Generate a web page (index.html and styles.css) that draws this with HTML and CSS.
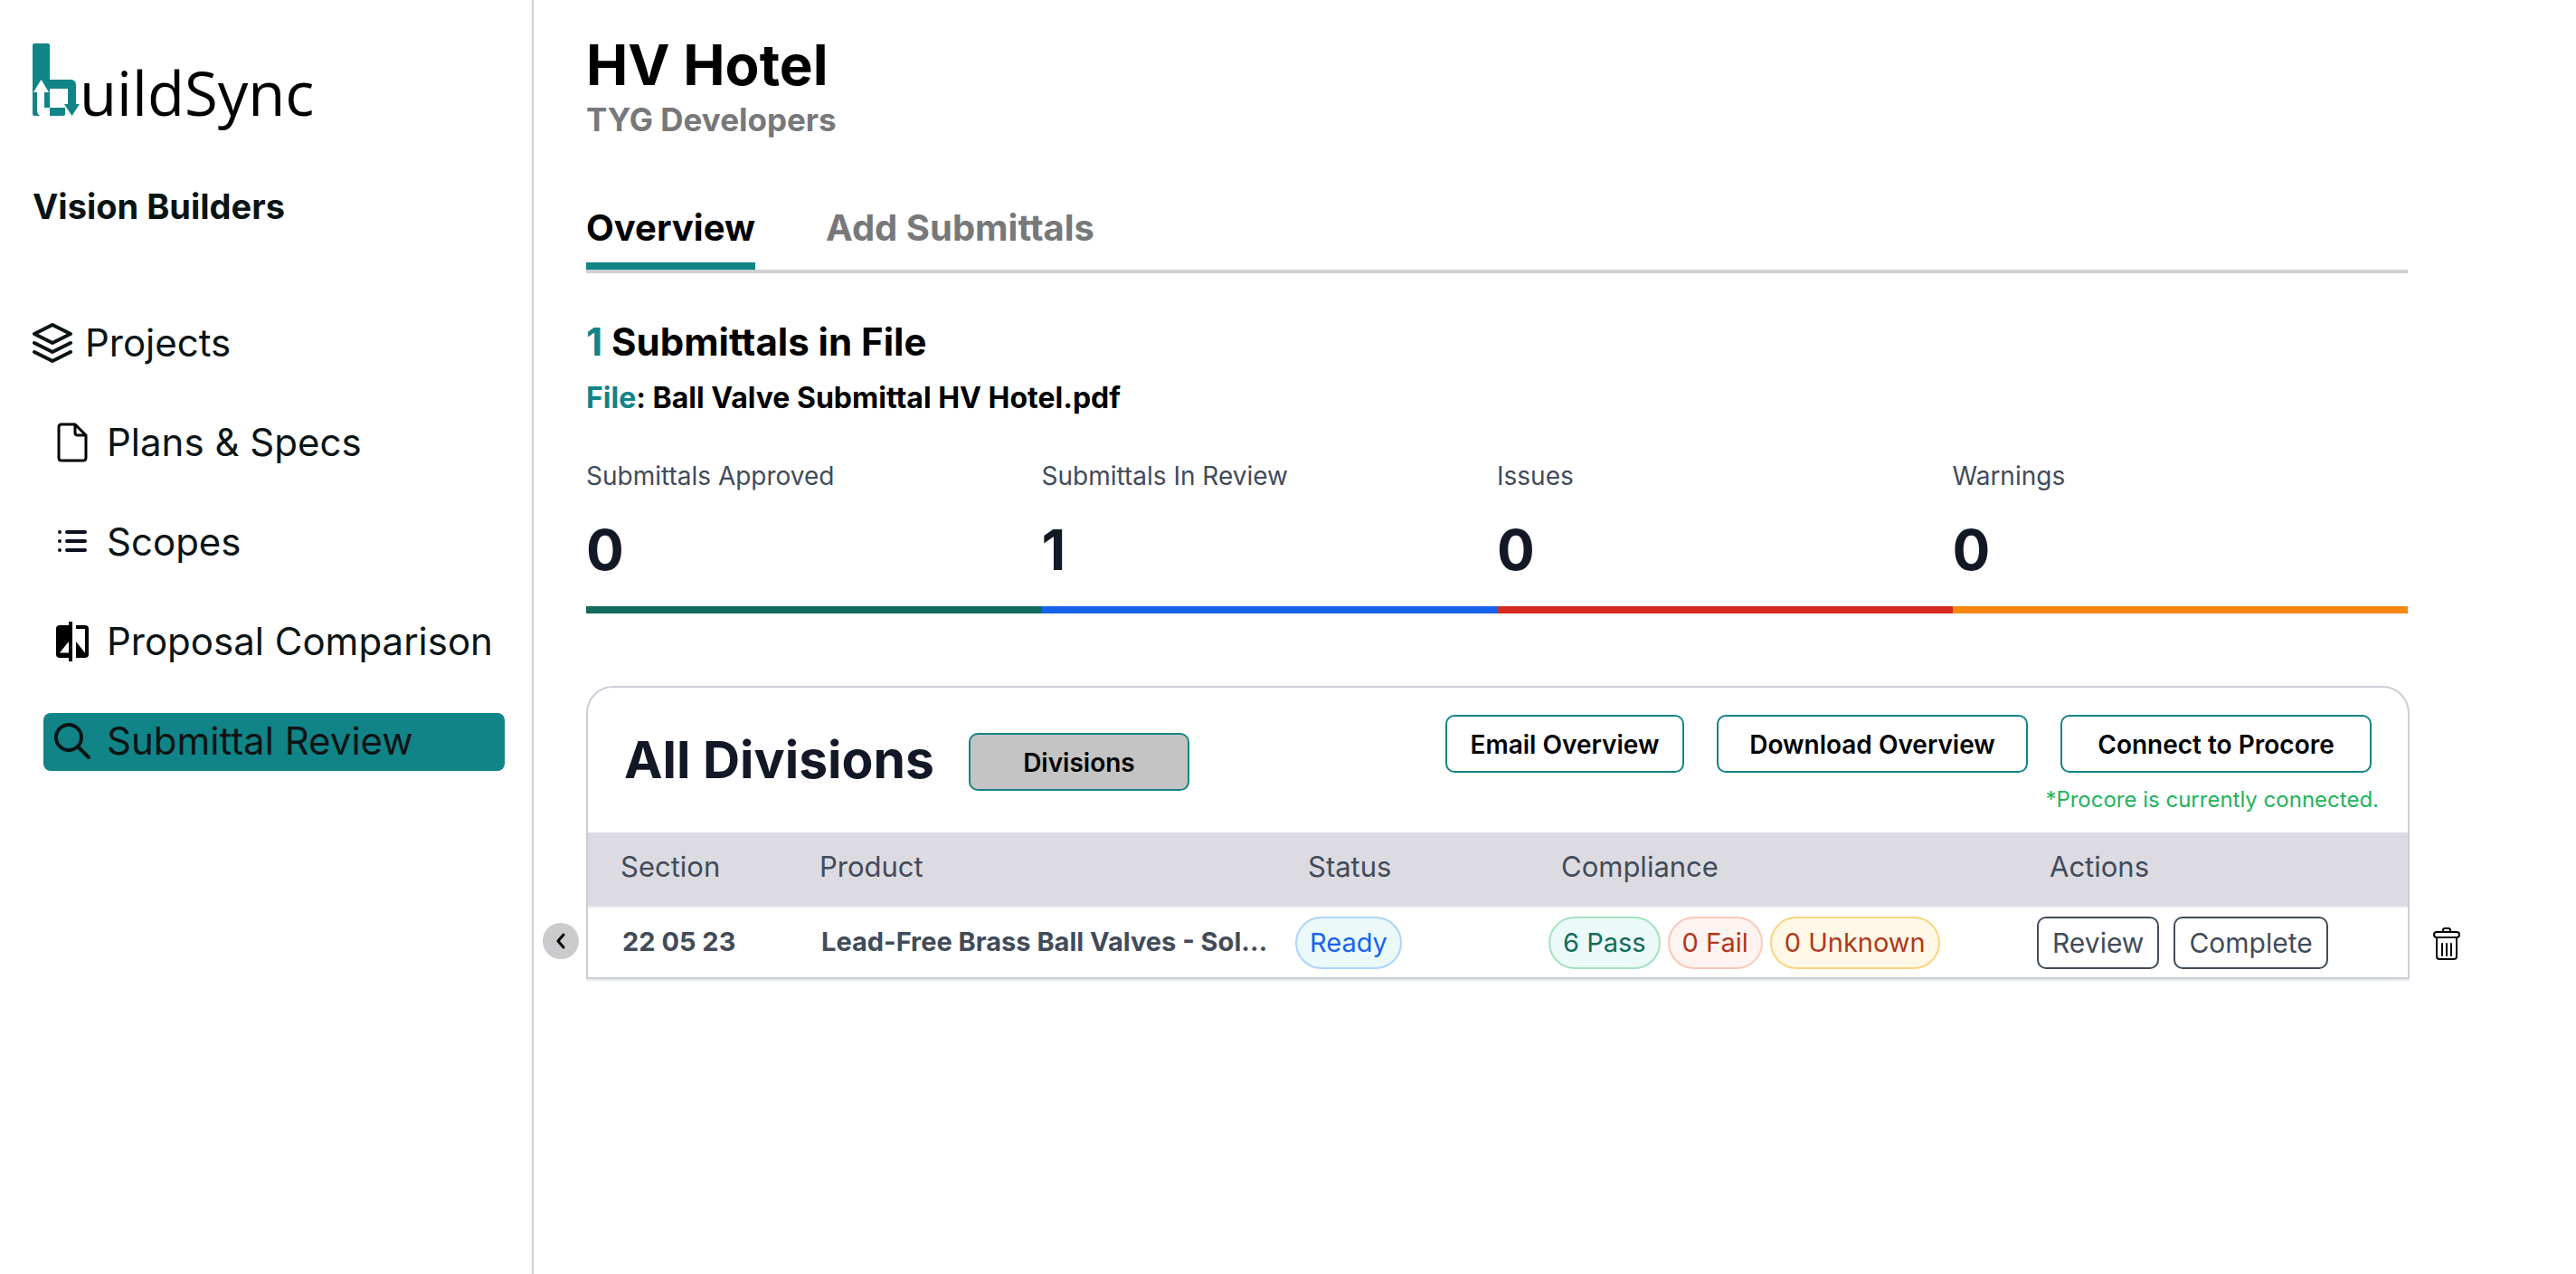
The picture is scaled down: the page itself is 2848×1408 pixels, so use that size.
FILE: index.html
```html
<!DOCTYPE html>
<html lang="en">
<head>
    <meta charset="UTF-8">
    <meta name="viewport" content="width=device-width, initial-scale=1.0">
    <title>HV Hotel - Submittal Review</title>
    <link rel="stylesheet" href="styles.css">
</head>
<body>
    <aside class="sidebar">
        <a class="logo" href="#">
            <svg class="logo-mark" viewBox="0 0 52 80" aria-hidden="true">
                <path fill="#118488" d="M0 2q0-2 2-2h15q2 0 2 2v78H2q-2 0-2-2z"/>
                <path fill="#118488" d="M19 40h23q6 0 6 6v21h4l-8.500 13L35 67h4V50H19zM19 71h17v7q0 2-2 2H19z"/>
                <path fill="#fff" d="M9.500 40L18 54h-5v17h6v9H9q-4-1-4-6V54H1z"/>
            </svg>
            <span class="logo-text">uildSync</span>
        </a>
        <h3 class="company">Vision Builders</h3>
        <nav class="nav">
            <a class="nav-item top" href="#">
                <svg class="nav-icon" viewBox="0 0 44 48" fill="none" stroke="#0b1415" stroke-width="4" stroke-linecap="round" stroke-linejoin="round">
                    <path d="M22 4L42 14 22 24 2 14zM2 24l20 10 20-10M2 34l20 10 20-10"/>
                </svg>
                Projects
            </a>
            <a class="nav-item" href="#">
                <svg class="nav-icon" viewBox="0 0 48 48" fill="none" stroke="#000" stroke-width="3" stroke-linejoin="round">
                    <path d="M27 4H12q-3 0-3 3v34q0 3 3 3h24q3 0 3-3V16zM27 4v9q0 3 3 3h9"/>
                </svg>
                Plans &amp; Specs
            </a>
            <a class="nav-item" href="#">
                <svg class="nav-icon" viewBox="0 0 48 48" fill="none" stroke="#0b1120" stroke-width="4" stroke-linecap="round">
                    <path d="M18 13h20M18 23h20M18 33h20M10 13h0M10 23h0M10 33h0"/>
                </svg>
                Scopes
            </a>
            <a class="nav-item" href="#">
                <svg class="nav-icon" viewBox="0 0 48 48" fill="#000">
                    <path fill-rule="evenodd" d="M20 2h4v44h-4v-4H10q-4 0-4-4V10q0-4 4-4h10zM20 24L10 36.500h10z"/>
                    <path d="M28 6h10q4 0 4 4v28q0 4-4 4H28V24l10 12.500V10H28z"/>
                </svg>
                Proposal Comparison
            </a>
            <a class="nav-item active" href="#">
                <svg class="nav-icon" viewBox="0 0 48 48" fill="none" stroke="#0b1415" stroke-width="4" stroke-linecap="round">
                    <circle cx="20" cy="20" r="14"/>
                    <path d="M31 31l11 11"/>
                </svg>
                Submittal Review
            </a>
        </nav>
    </aside>

    <main class="main">
        <header class="project-header">
            <h1>HV Hotel</h1>
            <p>TYG Developers</p>
        </header>

        <div class="tabs">
            <button class="tab active" type="button">Overview</button>
            <button class="tab" type="button">Add Submittals</button>
        </div>

        <section class="file-info">
            <h2><span class="teal">1</span> Submittals in File</h2>
            <p><span class="teal">File</span>: Ball Valve Submittal HV Hotel.pdf</p>
        </section>

        <section class="stats">
            <div class="stat green">
                <span class="stat-label">Submittals Approved</span>
                <span class="stat-value">0</span>
            </div>
            <div class="stat blue">
                <span class="stat-label">Submittals In Review</span>
                <span class="stat-value">1</span>
            </div>
            <div class="stat red">
                <span class="stat-label">Issues</span>
                <span class="stat-value">0</span>
            </div>
            <div class="stat orange">
                <span class="stat-label">Warnings</span>
                <span class="stat-value">0</span>
            </div>
        </section>

        <div class="divisions">
            <button class="collapse" type="button" aria-label="Collapse">
                <svg viewBox="0 0 20 20" fill="none" stroke="#000" stroke-width="3" stroke-linecap="round" stroke-linejoin="round">
                    <path d="M13 3L7 10l6 7"/>
                </svg>
            </button>

            <section class="card">
                <div class="card-header">
                    <h2>All Divisions</h2>
                    <button class="btn btn-divisions" type="button">Divisions</button>
                    <div class="card-actions">
                        <div class="card-buttons">
                            <button class="btn btn-email" type="button">Email Overview</button>
                            <button class="btn" type="button">Download Overview</button>
                            <button class="btn" type="button">Connect to Procore</button>
                        </div>
                        <p class="note">*Procore is currently connected.</p>
                    </div>
                </div>
                <table class="submittals">
                    <colgroup>
                        <col class="col-section">
                        <col class="col-product">
                        <col class="col-status">
                        <col class="col-compliance">
                        <col>
                    </colgroup>
                    <thead>
                        <tr>
                            <th>Section</th>
                            <th>Product</th>
                            <th>Status</th>
                            <th>Compliance</th>
                            <th>Actions</th>
                        </tr>
                    </thead>
                    <tbody>
                        <tr>
                            <td class="strong">22 05 23</td>
                            <td class="strong">Lead-Free Brass Ball Valves - Sol…</td>
                            <td class="chips"><span class="pill ready">Ready</span></td>
                            <td class="chips">
                                <div class="chip-row">
                                    <span class="pill pass">6 Pass</span>
                                    <span class="pill fail">0 Fail</span>
                                    <span class="pill unknown">0 Unknown</span>
                                </div>
                            </td>
                            <td class="chips">
                                <div class="action-row">
                                    <button class="row-btn" type="button">Review</button>
                                    <button class="row-btn" type="button">Complete</button>
                                </div>
                            </td>
                        </tr>
                    </tbody>
                </table>
            </section>

            <button class="trash" type="button" aria-label="Delete">
                <svg viewBox="0 0 30 38" fill="none" stroke="#000" stroke-width="2" stroke-linecap="round" stroke-linejoin="round">
                    <path d="M11 5.500V4q0-2 2-2h4q2 0 2 2v1.500"/>
                    <rect x="1" y="6" width="28" height="6" rx="3"/>
                    <path d="M4 12v21q0 3 3 3h16q3 0 3-3V12M10 19v13M15 19v13M20 19v13"/>
                </svg>
            </button>
        </div>
    </main>
</body>
</html>
```

FILE: styles.css
```css
* {
    box-sizing: border-box;
}
body {
    margin: 0;
    min-height: 100vh;
    display: flex;
    font-family: Inter, "Open Sans", sans-serif;
    background-color: #fff;
    color: #000;
}
h1, h2, h3, p {
    margin: 0;
}
button {
    font-family: inherit;
    cursor: pointer;
}
.teal {
    color: #118488;
}

/* Sidebar */
.sidebar {
    flex: 0 0 590px;
    padding: 48px 30px 0 36px;
    border-right: 2px solid #cfcfd1;
}
.logo {
    display: flex;
    align-items: baseline;
    color: #000;
    text-decoration: none;
}
.logo-mark {
    width: 52px;
    height: 80px;
}
.logo-text {
    font-family: "Open Sans", sans-serif;
    font-size: 67px;
    line-height: 68px;
}
.company {
    margin-top: 68px;
    font-size: 38px;
    line-height: 48px;
    color: #0b1415;
}
.nav {
    display: flex;
    flex-direction: column;
    gap: 46px;
    margin-top: 96px;
}
.nav-item {
    display: flex;
    align-items: center;
    gap: 14px;
    height: 64px;
    margin-left: 12px;
    padding: 0 0 2px 8px;
    border-radius: 8px;
    font-size: 42px;
    line-height: 60px;
    white-space: nowrap;
    color: #0b1415;
    text-decoration: none;
}
.nav-item.top {
    margin-left: 0;
    padding-left: 0;
}
.nav-item.active {
    background-color: #118488;
}
.nav-icon {
    width: 48px;
    height: 48px;
    flex: none;
}
.nav-item.top .nav-icon {
    width: 44px;
}

/* Main */
.main {
    flex: 1;
    min-width: 0;
    padding: 36px 186px 48px 58px;
}
.project-header h1 {
    font-size: 62px;
    line-height: 72px;
}
.project-header p {
    font-size: 35px;
    font-weight: bold;
    line-height: 48px;
    color: #77787a;
}
.tabs {
    display: flex;
    gap: 78px;
    margin-top: 72px;
    border-bottom: 4px solid #cfd0d3;
}
.tab {
    padding: 0 0 14px;
    border: none;
    border-bottom: 8px solid transparent;
    background: none;
    font-size: 40px;
    font-weight: bold;
    line-height: 48px;
    color: #77787a;
}
.tab.active {
    border-color: #118488;
    color: #000;
}
.file-info h2 {
    margin-top: 48px;
    font-size: 42px;
    line-height: 56px;
}
.file-info p {
    margin-top: 10px;
    font-size: 32px;
    font-weight: bold;
    line-height: 48px;
}

/* Stats */
.stats {
    display: grid;
    grid-template-columns: repeat(4, 1fr);
    margin-top: 42px;
}
.stat {
    display: flex;
    flex-direction: column;
    gap: 30px;
    padding-bottom: 30px;
    border-bottom: 8px solid;
}
.stat-label {
    font-size: 28px;
    line-height: 40px;
    color: #414b5a;
}
.stat-value {
    font-size: 62px;
    font-weight: bold;
    line-height: 64px;
    color: #121826;
}
.stat.green { border-color: #126b5c; }
.stat.blue { border-color: #1963ec; }
.stat.red { border-color: #d4291e; }
.stat.orange { border-color: #f8860f; }

/* Divisions card, with the row controls on either side of it */
.divisions {
    display: flex;
    align-items: flex-end;
    margin: 80px -58px 0 -48px;
}
.collapse {
    flex: none;
    display: flex;
    align-items: center;
    justify-content: center;
    width: 40px;
    height: 40px;
    margin: 0 8px 22px 0;
    padding: 0;
    border: none;
    border-radius: 50%;
    background-color: #cbcbcd;
}
.collapse svg {
    width: 20px;
    height: 20px;
}
.card {
    flex: 1;
    min-width: 0;
    border: 2px solid #c9ced7;
    border-radius: 30px 30px 0 0;
    box-shadow: 0 2px 0 #e8eaee;
    overflow: hidden;
}
.card-header {
    display: flex;
    align-items: flex-start;
    height: 160px;
    padding: 30px 32px 0 40px;
}
.card-header h2 {
    margin-top: 14px;
    font-size: 57px;
    line-height: 72px;
    color: #121826;
}
.btn {
    width: 344px;
    height: 64px;
    padding: 2px 0 0;
    border: 2px solid #118488;
    border-radius: 10px;
    background-color: #fff;
    font-size: 28px;
    font-weight: 600;
    color: #000;
}
.btn-divisions {
    width: 244px;
    margin: 20px 0 0 38px;
    background-color: #c4c4c4;
}
.btn-email {
    width: 264px;
}
.card-actions {
    margin-left: auto;
}
.card-buttons {
    display: flex;
    gap: 36px;
    padding-right: 8px;
}
.note {
    margin-top: 12px;
    font-size: 24px;
    line-height: 36px;
    text-align: right;
    color: #22b35b;
}

/* Table */
.submittals {
    width: 100%;
    table-layout: fixed;
    border-collapse: collapse;
    text-align: left;
    color: #414b5a;
}
.col-section { width: 220px; }
.col-product { width: 540px; }
.col-status { width: 280px; }
.col-compliance { width: 540px; }
.submittals th {
    height: 82px;
    padding: 0 0 6px 36px;
    background-color: #dcdbe1;
    border-bottom: 2px solid #e8e8ec;
    font-size: 31px;
    font-weight: normal;
}
.submittals td {
    height: 78px;
    padding: 0 0 0 38px;
    font-size: 29px;
    white-space: nowrap;
}
.submittals td.strong {
    padding-bottom: 2px;
    font-weight: bold;
}
.submittals td.chips {
    padding-left: 22px;
}
.chip-row {
    display: flex;
    gap: 8px;
}
.action-row {
    display: flex;
    gap: 16px;
}
.pill {
    display: inline-block;
    padding: 0 14px;
    border: 2px solid;
    border-radius: 29px;
    line-height: 54px;
}
.pill.ready { color: #1963ec; background-color: #ebf9f9; border-color: #acd4fb; }
.pill.pass { color: #126b5c; background-color: #ebf9f8; border-color: #a3e2bf; }
.pill.fail { color: #b0371a; background-color: #fdf3f1; border-color: #f8c9bd; }
.pill.unknown { color: #b0371a; background-color: #fff8e6; border-color: #fbd480; }
.row-btn {
    height: 58px;
    padding: 0 15px;
    border: 2px solid #414b5a;
    border-radius: 10px;
    background-color: #fff;
    font-size: 30px;
    color: #414b5a;
}
.trash {
    flex: none;
    width: 30px;
    height: 38px;
    margin: 0 0 20px 26px;
    padding: 0;
    border: none;
    background: none;
}
.trash svg {
    display: block;
    width: 30px;
    height: 38px;
}
```
